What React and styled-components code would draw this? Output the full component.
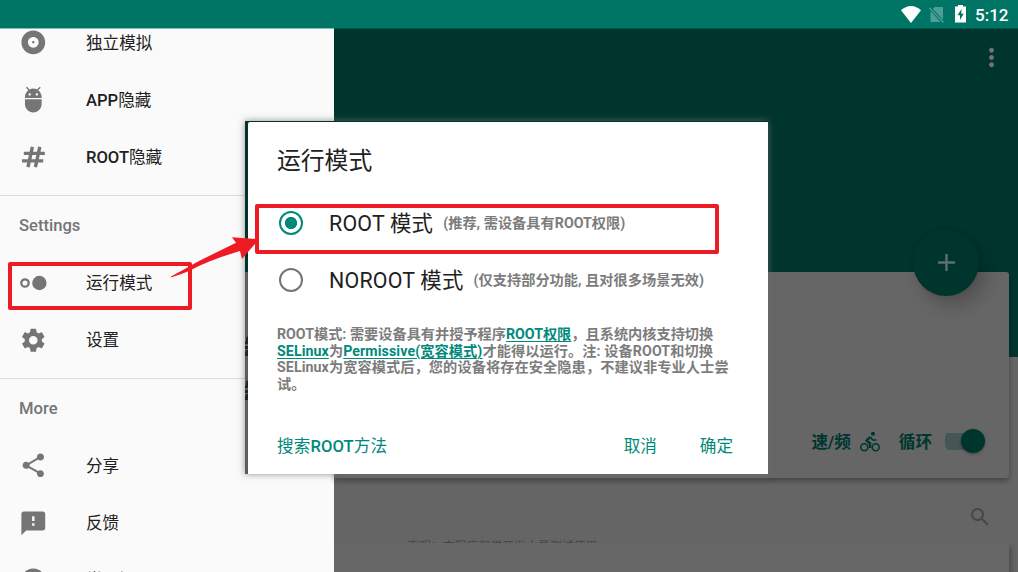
import React from "react";
import styled, { createGlobalStyle } from "styled-components";
import {
  MdAlbum, MdAdb, MdSettings, MdShare, MdFeedback, MdHelp, MdAdd,
  MdMoreVert, MdSearch,
} from "react-icons/md";

const Global = createGlobalStyle`
  * { box-sizing: border-box; }
  body { margin: 0; overflow: hidden; font-family: Roboto, "Noto Sans CJK SC", sans-serif; }
`;

const Screen = styled.div`
  position: relative;
  width: 1018px;
  height: 572px;
  overflow: hidden;
  display: flex;
  flex-direction: column;
  background: #656565;
`;

const StatusBar = styled.header`
  flex: none;
  height: 28px;
  display: flex;
  align-items: center;
  justify-content: flex-end;
  padding-right: 10px;
  background: #007566;
  color: #fff;
`;
const StatusIcon = styled.svg`
  display: block;
  margin-right: ${(p) => p.$gap}px;
`;
const Clock = styled.span`
  font-size: 17px;
  font-weight: 500;
  line-height: 20px;
  padding-top: 2px;
  width: 33px;
`;

const Body = styled.div`
  flex: 1;
  display: flex;
  min-height: 0;
`;

const Drawer = styled.nav`
  flex: none;
  width: 334px;
  background: #fafafa;
  overflow: hidden;
  border-top: 1px solid #86bdb6;
`;
const DrawerItem = styled.div`
  height: 57.2px;
  display: flex;
  align-items: center;
  padding-left: 19px;
  font-size: 16.6px;
  font-weight: 500;
  color: #212121;
  svg { flex: none; color: #757575; margin-right: 38.4px; }
`;
const Label = styled.span`
  line-height: 24px;
  padding-top: 2px;
  white-space: nowrap;
`;
const Items = styled.div`
  margin-top: ${(p) => p.$top || 0}px;
`;
const Section = styled.section`
  border-top: 1px solid #dadada;
  height: 182.8px;
`;
const SectionTitle = styled.h2`
  margin: 0;
  height: 58.3px;
  line-height: 59px;
  padding-left: 19px;
  font-size: 16.6px;
  font-weight: 500;
  color: #757575;
`;
const Cjk = styled.span`
  font-weight: 400;
`;

const Main = styled.main`
  flex: 1;
  display: flex;
  flex-direction: column;
  padding-right: 9px;
  border-top: 1px solid #00584c;
  background: linear-gradient(#00352e 0 328.5px, #656565 328.5px);
`;
const TopBar = styled.div`
  height: 243px;
  flex: none;
  display: flex;
  justify-content: flex-end;
  align-items: flex-start;
  padding: 14px 3px 0 0;
  color: #737373;
`;
const Card = styled.section`
  position: relative;
  height: 206px;
  flex: none;
  background: #666;
  border-radius: 0 3px 3px 0;
  box-shadow: 0 3px 5px rgba(0, 0, 0, 0.32);
  display: flex;
  flex-direction: column;
  justify-content: flex-end;
`;
const Fab = styled.button`
  position: absolute;
  right: 30px;
  top: -43px;
  width: 66px;
  height: 67px;
  border: 0;
  border-radius: 50%;
  padding: 0;
  background: #00352e;
  color: #5f6f6c;
  display: flex;
  align-items: center;
  justify-content: center;
  box-shadow: 8px 10px 18px rgba(0, 0, 0, 0.2), 0 0 5px rgba(0, 0, 0, 0.12);
`;
const Controls = styled.div`
  display: flex;
  align-items: center;
  height: 28px;
  margin-bottom: 23px;
  padding-right: 24px;
  justify-content: flex-end;
  font-size: 16.6px;
  font-weight: 700;
  color: #00362f;
  svg { margin: 0 19px 0 9px; }
`;
const Toggle = styled.span`
  width: 40px;
  height: 24px;
  margin-left: 13px;
  display: flex;
  align-items: center;
  justify-content: flex-end;
  background: linear-gradient(#465653, #465653) 0 4px / 34px 17px no-repeat;
  border-radius: 9px 0 0 9px;
  &::after {
    content: "";
    width: 24px;
    height: 24px;
    border-radius: 50%;
    background: #00352e;
    box-shadow: 0 1px 3px rgba(0, 0, 0, 0.35);
  }
`;
const SearchRow = styled.div`
  height: 65px;
  flex: none;
  display: flex;
  justify-content: space-between;
  color: #464646;
  padding: 27px 17px 0 73px;
`;
const Notice = styled.p`
  margin: 33px 0 0;
  height: 5px;
  overflow: hidden;
  font-size: 11.9px;
  line-height: 16px;
  color: #454545;
`;
const NextCard = styled.div`
  flex: 1;
  background: #676767;
  box-shadow: 3px 3px 4px rgba(0, 0, 0, 0.22);
`;

const DialogFrame = styled.div`
  position: absolute;
  left: 245px;
  top: 121px;
  width: 523px;
  height: 353px;
  padding: 1px 0 0 3px;
  background: linear-gradient(#00352e 0 151px, #5c5c5c 151px);
  box-shadow: 0 0 7px rgba(110, 110, 110, 0.75);
`;
const Peek = styled.svg`
  position: absolute;
  left: 0;
  top: ${(p) => p.$top}px;
`;
const Dialog = styled.div`
  height: 352px;
  background: #fff;
  border-radius: 2px 0 0 0;
  padding: 21px 28px 0 29px;
`;
const DialogTitle = styled.h1`
  margin: 0;
  height: 36px;
  line-height: 36px;
  font-size: 23.8px;
  font-weight: 400;
  color: #212121;
`;
const Option = styled.label`
  height: 57.3px;
  display: flex;
  align-items: center;
  font-size: 21.4px;
  letter-spacing: 0.2px;
  color: #212121;
  white-space: nowrap;
`;
const OptionText = styled.span`
  padding-bottom: 3px;
`;
const Options = styled.div`
  padding-top: 15.5px;
`;
const Radio = styled.span`
  width: 24px;
  height: 24px;
  margin: 0 26px 0 2px;
  flex: none;
  border-radius: 50%;
  border: 2px solid ${(p) => (p.$on ? "#00897b" : "#757575")};
  background: ${(p) => (p.$on ? "radial-gradient(circle, #00897b 5.7px, #fff 6.5px)" : "#fff")};
`;
const Hint = styled.small`
  margin-left: 10px;
  padding-bottom: 2px;
  font-size: 14.2px;
  letter-spacing: 0.03px;
  font-weight: 700;
  color: #7c7c7c;
`;
const Note = styled.p`
  margin: 16.9px 0 0;
  height: 68.6px;
  font-size: 14.2px;
  font-weight: 700;
  line-height: 16.7px;
  color: #7c7c7c;
  white-space: nowrap;
`;
const Wide = styled.span`
  letter-spacing: 0.09px;
`;
const Link = styled.a`
  color: #00897b;
  text-decoration: underline;
  text-decoration-thickness: 1px;
  text-underline-offset: 2px;
`;
const Actions = styled.div`
  display: flex;
  gap: 43px;
  margin-top: 40px;
  padding-right: 7px;
  font-size: 16.6px;
  font-weight: 500;
  line-height: 24px;
  color: #00897b;
  & > :first-child { margin-right: auto; letter-spacing: 0.1px; }
`;

const Marker = styled.div`
  position: absolute;
  left: ${(p) => p.$x}px;
  top: ${(p) => p.$y}px;
  width: ${(p) => p.$w}px;
  height: ${(p) => p.$h}px;
  border: 4px solid #ed1c24;
  border-radius: 2px;
`;
const Arrow = styled.svg`
  position: absolute;
  left: 168px;
  top: 230px;
`;

const HashIcon = () => (
  <svg width="28.6" height="28.6" viewBox="0 0 28.6 28.6" fill="none" stroke="currentColor" strokeWidth="3.4">
    <path d="M13.4 3.8 9 24.2M20.8 3.8 16.4 24.2M4.8 10.4H25.8M3 17.9H24.2" />
  </svg>
);
const ModeIcon = () => (
  <svg width="28.6" height="28.6" viewBox="0 0 28.6 28.6">
    <circle cx="6" cy="14" r="3.7" fill="none" stroke="currentColor" strokeWidth="2.3" />
    <circle cx="20.4" cy="14" r="7.2" fill="currentColor" />
  </svg>
);
const BikeIcon = () => (
  <svg width="20" height="21" viewBox="0 0 20 21" fill="none" stroke="currentColor">
    <circle cx="4.3" cy="16.3" r="3.5" strokeWidth="1.5" />
    <circle cx="15.7" cy="16.3" r="3.5" strokeWidth="1.5" />
    <circle cx="13" cy="2.7" r="2" fill="currentColor" stroke="none" />
    <path strokeWidth="2.4" strokeLinejoin="round" d="M10.3 6 6.4 9.7 10 12.3V17" />
    <path strokeWidth="1.7" strokeLinejoin="round" d="M10.3 6 12.8 9H16.5" />
  </svg>
);
const BatteryIcon = () => (
  <StatusIcon $gap={9} width="11" height="18" viewBox="0 0 11 18">
    <path fill="#fff" d="M3 0h5v1.5h3V17.5H0V1.500h3z" />
    <path fill="#007566" d="M6.5 4 2.5 10.3H5V15l3.700-6.300H6.300z" />
  </StatusIcon>
);
const PeekMark = ({ top }) => (
  <Peek $top={top} width="3" height="21" viewBox="0 0 3 21">
    <path fill="#1c2826" d="M1 2 3 0V8H0V6L1 5zM0 10H3V13H0zM1 14H3V20H0V17z" />
  </Peek>
);

export default function App() {
  return (
    <Screen>
      <Global />
      <StatusBar>
        <StatusIcon $gap={8} width="20" height="17" viewBox="0 0 20 17">
          <path fill="#fff" d="M0 4.3C2.8 1.6 6.2 0 10 0s7.2 1.6 10 4.3L10 17z" />
        </StatusIcon>
        <StatusIcon $gap={11} width="15" height="17" viewBox="0 0 15 17">
          <path fill="#4d9e94" d="M5.5 1H14v13L4 3zM1.5 5 11.5 16H1.5z" />
          <path stroke="#4d9e94" strokeWidth="1.3" d="M.5 2 14.5 16.5" />
        </StatusIcon>
        <BatteryIcon />
        <Clock>5:12</Clock>
      </StatusBar>
      <Body>
        <Drawer>
          <Items $top={-15}>
            <DrawerItem><MdAlbum size={28.6} /><Label><Cjk>独立模拟</Cjk></Label></DrawerItem>
            <DrawerItem><MdAdb size={28.6} /><Label>APP<Cjk>隐藏</Cjk></Label></DrawerItem>
            <DrawerItem><HashIcon /><Label>ROOT<Cjk>隐藏</Cjk></Label></DrawerItem>
          </Items>
          <Items $top={9.4}>
            <Section>
              <SectionTitle>Settings</SectionTitle>
              <DrawerItem><ModeIcon /><Label><Cjk>运行模式</Cjk></Label></DrawerItem>
              <DrawerItem><MdSettings size={28.6} /><Label><Cjk>设置</Cjk></Label></DrawerItem>
            </Section>
            <Section>
              <SectionTitle>More</SectionTitle>
              <DrawerItem><MdShare size={28.6} /><Label><Cjk>分享</Cjk></Label></DrawerItem>
              <DrawerItem><MdFeedback size={28.6} /><Label><Cjk>反馈</Cjk></Label></DrawerItem>
              <DrawerItem><MdHelp size={28.6} /><Label><Cjk>常见问题</Cjk></Label></DrawerItem>
            </Section>
          </Items>
        </Drawer>
        <Main>
          <TopBar><MdMoreVert size={29} /></TopBar>
          <Card>
            <Fab><MdAdd size={29} /></Fab>
            <Controls>
              速/频<BikeIcon />循环<Toggle />
            </Controls>
          </Card>
          <SearchRow>
            <Notice>声明：本程序仅供开发人员测试使用</Notice>
            <MdSearch size={24} />
          </SearchRow>
          <NextCard />
        </Main>
      </Body>
      <DialogFrame>
        <PeekMark top={215} />
        <PeekMark top={259} />
        <Dialog>
          <DialogTitle>运行模式</DialogTitle>
          <Options>
            <Option><Radio $on /><OptionText>ROOT 模式</OptionText><Hint>(推荐, 需设备具有ROOT权限)</Hint></Option>
            <Option><Radio /><OptionText>NOROOT 模式</OptionText><Hint>(仅支持部分功能, 且对很多场景无效)</Hint></Option>
          </Options>
          <Note>
            ROOT模式: 需要设备具有并授予程序<Link>ROOT权限</Link>，且系统内核支持切换<br />
            <Wide>
              <Link>SELinux</Link>为<Link>Permissive(宽容模式)</Link>才能得以运行。注: 设备ROOT和切换<br />
              SELinux为宽容模式后，您的设备将存在安全隐患，不建议非专业人士尝<br />
              试。
            </Wide>
          </Note>
          <Actions>
            <span><Cjk>搜索</Cjk>ROOT<Cjk>方法</Cjk></span>
            <Cjk>取消</Cjk>
            <Cjk>确定</Cjk>
          </Actions>
        </Dialog>
      </DialogFrame>
      <Marker $x={8} $y={262} $w={184} $h={48} />
      <Marker $x={255} $y={204} $w={464} $h={50} />
      <Arrow width="92" height="50" viewBox="0 0 92 50">
        <path fill="#ed1c24" d="M3 46.5C10 43 24 34.5 32 30.5L68 12.7 64 7.3 91 9.3 74 29 72 21C55 26 36 33 26 38.5 18 42.5 8 46 3 47.5z" />
      </Arrow>
    </Screen>
  );
}
